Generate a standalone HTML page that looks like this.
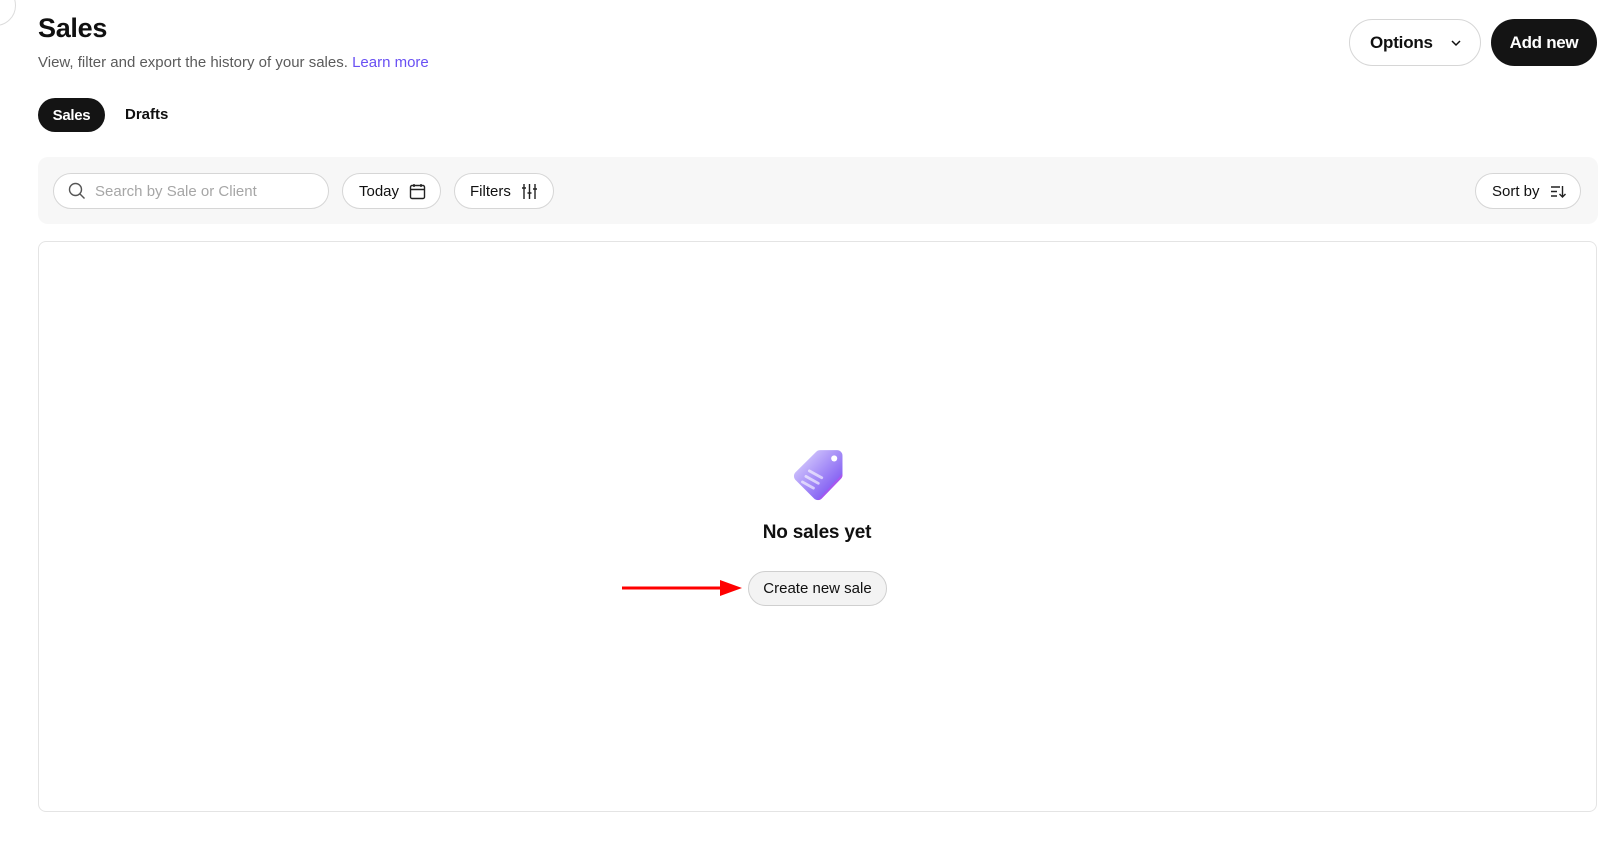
<!DOCTYPE html>
<html><head><meta charset="utf-8"><style>
*{box-sizing:border-box;margin:0;padding:0}
body{width:1612px;height:853px;background:#fff;font-family:"Liberation Sans",sans-serif;color:#101010;position:relative;overflow:hidden}
.a{position:absolute}
.pill{position:absolute;border:1px solid #d6d6d6;border-radius:20px;background:#fff;display:flex;align-items:center;font-size:15px;color:#101010}
</style></head><body>
<div class="a" style="left:-25px;top:-15px;width:41px;height:41px;border:1px solid #dcdcdc;border-radius:50%"></div>
<div class="a" style="left:38px;top:13px;font-size:27px;font-weight:bold;letter-spacing:-0.3px">Sales</div>
<div class="a" style="left:38px;top:54px;font-size:15px;color:#5b5b5b">View, filter and export the history of your sales. <span style="color:#6950f3">Learn more</span></div>
<div class="a" style="left:38px;top:98px;width:67px;height:34px;border-radius:17px;background:#141414;color:#fff;font-size:15px;font-weight:bold;display:flex;align-items:center;justify-content:center;letter-spacing:-0.3px">Sales</div>
<div class="a" style="left:125px;top:106px;font-size:15px;font-weight:bold">Drafts</div>

<div class="pill" style="left:1349px;top:19px;width:132px;height:47px;border-radius:24px;padding-left:20px;font-size:17px;font-weight:bold;letter-spacing:-0.2px">Options
<svg style="margin-left:16px" width="14" height="14" viewBox="0 0 14 14"><path d="M3 5l4 4 4-4" fill="none" stroke="#101010" stroke-width="1.5"/></svg></div>
<div class="a" style="left:1491px;top:19px;width:106px;height:47px;border-radius:24px;background:#141414;color:#fff;font-size:17px;font-weight:bold;display:flex;align-items:center;justify-content:center;letter-spacing:-0.3px">Add new</div>

<div class="a" style="left:38px;top:157px;width:1560px;height:67px;background:#f7f7f7;border-radius:10px"></div>
<div class="pill" style="left:53px;top:173px;width:276px;height:36px;padding-left:14px;color:#a6a6a6">
<svg width="18" height="18" viewBox="0 0 18 18"><circle cx="7.5" cy="7.5" r="6" fill="none" stroke="#555" stroke-width="1.4"/><path d="M12 12l4.5 4.5" stroke="#555" stroke-width="1.4"/></svg>
<span style="margin-left:9px">Search by Sale or Client</span></div>
<div class="pill" style="left:342px;top:173px;width:99px;height:36px;padding-left:16px">Today
<svg style="margin-left:10px" width="17" height="17" viewBox="0 0 17 17"><rect x="1.5" y="2.5" width="14" height="13" rx="1.5" fill="none" stroke="#222" stroke-width="1.4"/><path d="M1.5 6.5h14M5 1v3M12 1v3" stroke="#222" stroke-width="1.4"/></svg></div>
<div class="pill" style="left:454px;top:173px;width:100px;height:36px;padding-left:15px">Filters
<svg style="margin-left:10px" width="17" height="17" viewBox="0 0 17 17"><path d="M3 1v15M8.5 1v15M14 1v15M1 5h4M6.5 10h4M12 6h4" stroke="#222" stroke-width="1.4"/></svg></div>
<div class="pill" style="left:1475px;top:173px;width:106px;height:36px;padding-left:16px">Sort by
<svg style="margin-left:10px" width="17" height="15" viewBox="0 0 17 15"><path d="M1 3h9M1 7.5h6M1 12h6M12.5 2v11M9.5 10l3 3 3-3" fill="none" stroke="#222" stroke-width="1.4"/></svg></div>

<div class="a" style="left:38px;top:241px;width:1559px;height:571px;border:1px solid #e4e4e4;border-radius:8px"></div>
<svg class="a" style="left:790px;top:446px" width="58" height="58" viewBox="4 2 42 42">
<defs><linearGradient id="g" x1="0" y1="0" x2="1" y2="1"><stop offset="0" stop-color="#e6e0ff"/><stop offset="0.5" stop-color="#a58df7"/><stop offset="1" stop-color="#6b3df0"/></linearGradient>
<linearGradient id="g2" x1="0" y1="0" x2="1" y2="1"><stop offset="0" stop-color="#7a5cf5"/><stop offset="1" stop-color="#d14ee8"/></linearGradient></defs>
<path d="M26 5h12a4 4 0 0 1 4 4v14a4 4 0 0 1-1.2 2.8L27 40a4 4 0 0 1-5.6 0L8 26.6a4 4 0 0 1 0-5.6L23 6.2A4 4 0 0 1 26 5z" fill="url(#g)"/>
<path d="M42 14v9a4 4 0 0 1-1.2 2.8L27 40a4 4 0 0 1-3 1.2L42 22z" fill="url(#g2)" opacity="0.8"/>
<circle cx="36" cy="11" r="2.2" fill="#fff"/>
<path d="M18 20l9 5M15.5 24l9 5M13 28l8 4.5" stroke="#fff" stroke-opacity="0.6" stroke-width="2" stroke-linecap="round"/>
</svg>
<div class="a" style="left:717px;top:522px;width:200px;text-align:center;font-size:19px;font-weight:bold;letter-spacing:-0.2px">No sales yet</div>
<div class="a" style="left:748px;top:571px;width:139px;height:35px;border:1px solid #cfcfcf;border-radius:18px;background:#f3f3f3;font-size:15px;display:flex;align-items:center;justify-content:center">Create new sale</div>
<svg class="a" style="left:620px;top:578px" width="125" height="20" viewBox="0 0 125 20"><path d="M2 10h100" stroke="#f00" stroke-width="3"/><path d="M100 2l22 8-22 8z" fill="#f00"/></svg>
</body></html>
